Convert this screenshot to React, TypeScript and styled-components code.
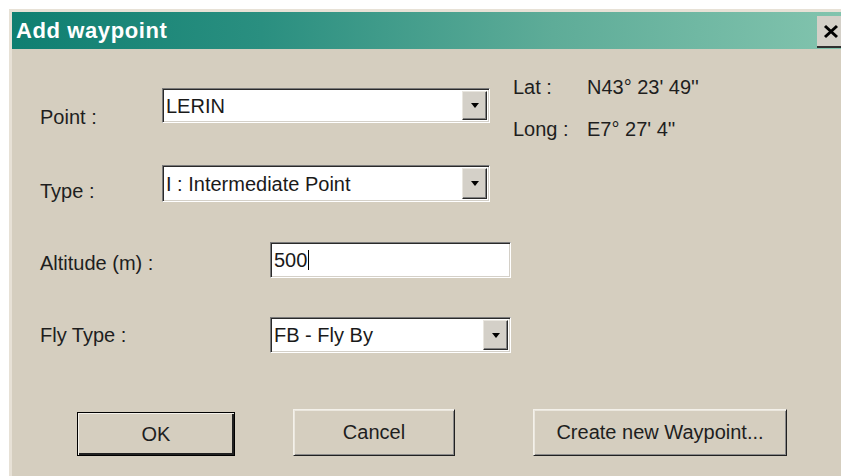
import React, { FC } from "react";
import styled, { createGlobalStyle } from "styled-components";

const FACE = "#d5cebf";
const FONT = `"Liberation Sans", Arial, sans-serif`;

const GlobalStyle = createGlobalStyle`
  html, body {
    margin: 0;
    padding: 0;
    background: #ffffff;
    overflow: hidden;
  }
  body {
    font-family: ${FONT};
  }
`;

const Window = styled.div`
  margin: 9px 0 0 9px;
  width: 835px;
  height: 470px;
  display: flex;
  flex-direction: column;
  background: ${FACE};
  border-top: 3px solid #e7e1d6;
  border-left: 3px solid #e7e1d6;
  box-sizing: border-box;
`;

const TitleBar = styled.div`
  height: 37px;
  display: flex;
  align-items: center;
  padding-left: 4px;
  background: linear-gradient(90deg, #0f7f71 0%, #2a8f80 30%, #5eac98 65%, #82c4ae 100%);
  color: #ffffff;
  font-size: 22px;
  font-weight: bold;
  letter-spacing: 0.6px;
`;

const TitleText = styled.span`
  flex: 1;
`;

const CloseButton = styled.div`
  width: 27px;
  height: 32px;
  margin-top: 3px;
  display: flex;
  align-items: center;
  justify-content: center;
  background: #d4d0c8;
  border-bottom: 2px solid #303030;
  box-sizing: border-box;
`;

const Content = styled.div`
  flex: 1;
  padding: 27px 0 0 28px;
  display: flex;
  flex-direction: column;
  color: #1e1e1e;
  font-size: 20px;
`;

const TopSection = styled.div`
  display: flex;
  gap: 23px;
`;

const FieldColumn = styled.div`
  padding-top: 12px;
  display: flex;
  flex-direction: column;
  gap: 37px;
`;

const FieldRow = styled.div<{ $gapTop?: number }>`
  display: flex;
  align-items: flex-start;
  margin-top: ${(p) => p.$gapTop ?? 0}px;
`;

const Label = styled.div<{ $width: number; $drop: number }>`
  width: ${(p) => p.$width}px;
  line-height: 22px;
  margin-top: ${(p) => p.$drop}px;
  flex-shrink: 0;
`;

const InfoGrid = styled.div`
  display: grid;
  grid-template-columns: 74px auto;
  row-gap: 20px;
  line-height: 22px;
  align-content: start;
`;

const Sunken = styled.div<{ $width: number; $height: number }>`
  width: ${(p) => p.$width}px;
  height: ${(p) => p.$height}px;
  display: flex;
  align-items: stretch;
  background: #ffffff;
  border: 1px solid;
  border-color: #7a7a7a #ffffff #ffffff #7a7a7a;
  box-shadow: inset 1px 1px #2a2a2a, inset -1px -1px #d4d0c8;
  box-sizing: border-box;
`;

const FieldText = styled.div`
  flex: 1;
  display: flex;
  align-items: center;
  padding-left: 3px;
  line-height: 22px;
  color: #1a1a1a;
`;

const Caret = styled.span`
  display: inline-block;
  width: 0;
  height: 20px;
  border-left: 1px solid #000;
  margin-left: 1px;
`;

const DropButton = styled.div`
  width: 23px;
  margin: 2px 2px 2px 0;
  display: flex;
  align-items: center;
  justify-content: center;
  background: #d4d0c8;
  border: 1px solid;
  border-color: #e9e6df #2a2a2a #2a2a2a #e9e6df;
  box-shadow: inset -1px -1px #808080;
`;

const Arrow = styled.span`
  width: 0;
  height: 0;
  border-left: 4px solid transparent;
  border-right: 4px solid transparent;
  border-top: 5px solid #000;
`;

const ButtonRow = styled.div`
  display: flex;
  align-items: flex-end;
  margin-top: 56px;
  padding-left: 37px;
`;

const Button = styled.div<{ $width: number; $gap: number; $isDefault?: boolean }>`
  width: ${(p) => p.$width}px;
  height: ${(p) => (p.$isDefault ? 44 : 47)}px;
  margin-left: ${(p) => p.$gap}px;
  display: flex;
  align-items: center;
  justify-content: center;
  background: ${FACE};
  color: #1e1e1e;
  font-size: 20px;
  box-sizing: border-box;
  border: 1px solid;
  border-color: ${(p) =>
    p.$isDefault ? "#000 #000 #000 #000" : "#f4f1ea #202020 #202020 #f4f1ea"};
  box-shadow: ${(p) =>
    p.$isDefault
      ? "inset 1px 1px #f4f1ea, inset -2px -2px #202020"
      : "inset 1px 1px #ebe7de, inset -1px -1px #8a8a8a"};
`;

interface ComboProps {
  value: string;
  width: number;
  height: number;
}

const Combo: FC<ComboProps> = ({ value, width, height }) => (
  <Sunken $width={width} $height={height}>
    <FieldText>{value}</FieldText>
    <DropButton>
      <Arrow />
    </DropButton>
  </Sunken>
);

const CloseIcon = () => (
  <svg width="16" height="15" viewBox="0 0 16 15">
    <path d="M2 2 L14 13 M14 2 L2 13" stroke="#000" strokeWidth="3" />
  </svg>
);

export default function App() {
  return (
    <>
      <GlobalStyle />
      <Window>
        <TitleBar>
          <TitleText>Add waypoint</TitleText>
          <CloseButton>
            <CloseIcon />
          </CloseButton>
        </TitleBar>
        <Content>
          <TopSection>
            <FieldColumn>
              <FieldRow>
                <Label $width={122} $drop={18}>
                  Point :
                </Label>
                <Combo value="LERIN" width={328} height={35} />
              </FieldRow>
              <FieldRow>
                <Label $width={122} $drop={15}>
                  Type :
                </Label>
                <Combo value="I : Intermediate Point" width={328} height={37} />
              </FieldRow>
            </FieldColumn>
            <InfoGrid>
              <span>Lat :</span>
              <span>N43° 23' 49''</span>
              <span>Long :</span>
              <span>E7° 27' 4''</span>
            </InfoGrid>
          </TopSection>
          <FieldRow $gapTop={40}>
            <Label $width={230} $drop={10}>
              Altitude (m) :
            </Label>
            <Sunken $width={241} $height={36}>
              <FieldText>
                500
                <Caret />
              </FieldText>
            </Sunken>
          </FieldRow>
          <FieldRow $gapTop={39}>
            <Label $width={230} $drop={7}>
              Fly Type :
            </Label>
            <Combo value="FB - Fly By" width={241} height={36} />
          </FieldRow>
          <ButtonRow>
            <Button $width={158} $gap={0} $isDefault>
              OK
            </Button>
            <Button $width={162} $gap={58}>
              Cancel
            </Button>
            <Button $width={254} $gap={78}>
              Create new Waypoint...
            </Button>
          </ButtonRow>
        </Content>
      </Window>
    </>
  );
}
